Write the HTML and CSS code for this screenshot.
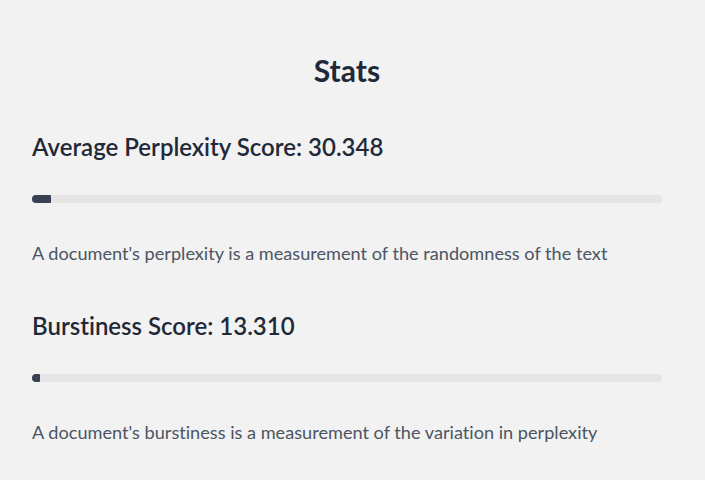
FILE: index.html
```html
<!DOCTYPE html>
<html>
<head>
<meta charset="utf-8">
<link rel="stylesheet" href="styles.css">
</head>
<body>
<main class="stats">
  <h1 class="title">Stats</h1>
  <section class="stat">
    <h2 class="stat-heading">Average Perplexity Score: 30.348</h2>
    <div class="bar"><div class="bar-fill" style="width: 3%"></div></div>
    <p class="stat-desc">A document's perplexity is a measurement of the randomness of the text</p>
  </section>
  <section class="stat">
    <h2 class="stat-heading">Burstiness Score: 13.310</h2>
    <div class="bar"><div class="bar-fill" style="width: 1.3%"></div></div>
    <p class="stat-desc">A document's burstiness is a measurement of the variation in perplexity</p>
  </section>
</main>
</body>
</html>
```
FILE: styles.css
```css
html, body {
  margin: 0;
  padding: 0;
  background: #f2f2f2;
}
body {
  font-family: Lato, "Noto Sans", sans-serif;
  font-variant-ligatures: none;
  color: #1f2937;
}
.stats {
  width: 630px;
  padding: 50px 32px 0 32px;
  display: flex;
  flex-direction: column;
}
.title {
  margin: 0;
  font-size: 30px;
  font-weight: 700;
  line-height: 40px;
  text-align: center;
}
.stat {
  display: flex;
  flex-direction: column;
}
.stat + .stat {
  margin-top: 4px;
}
.stat-heading {
  margin: 41px 0 0 0;
  font-size: 24px;
  font-weight: 600;
  line-height: 32px;
}
.bar {
  margin-top: 32px;
  height: 8px;
  border-radius: 4px;
  background: #e5e5e5;
  overflow: hidden;
}
.bar-fill {
  height: 100%;
  background: #374151;
  border-radius: 0 1px 1px 0;
}
.stat-desc {
  margin: 38px 0 0 0;
  font-size: 18.15px;
  line-height: 24px;
  color: #4b5563;
}
```
